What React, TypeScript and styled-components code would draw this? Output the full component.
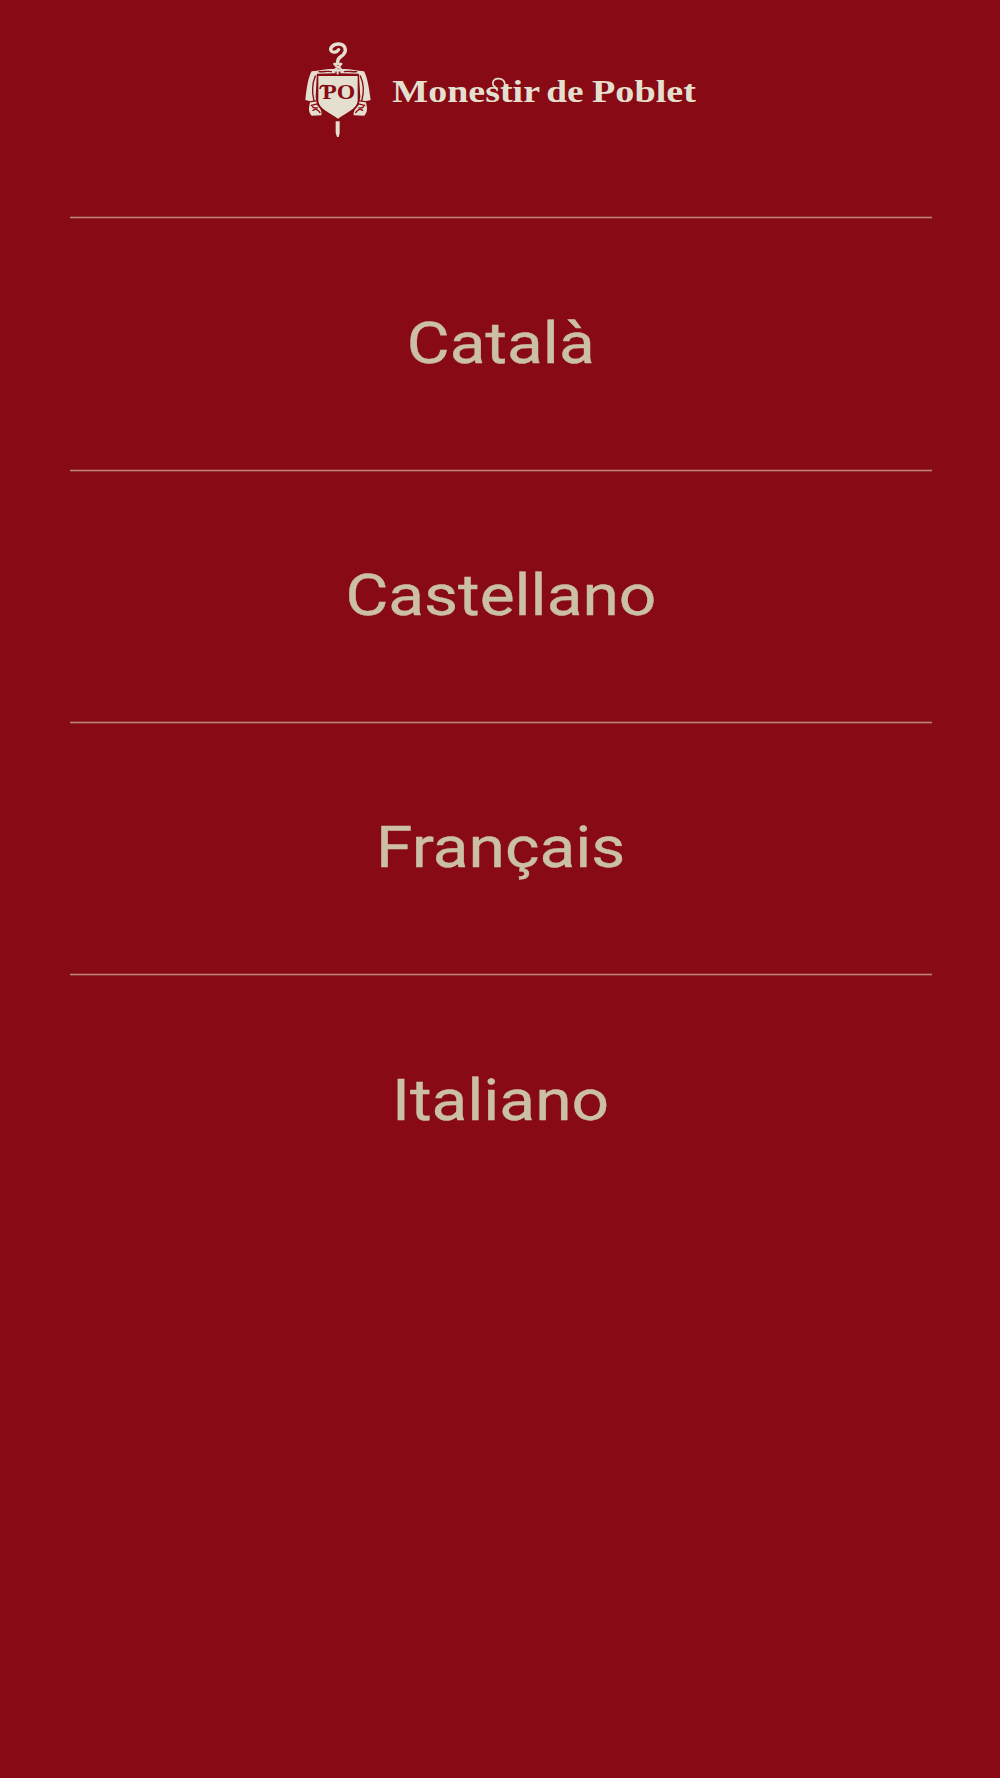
import { FC } from 'react';
import styled, { createGlobalStyle } from 'styled-components';

const languages = [
    { code: 'ca', name: 'Català' },
    { code: 'es', name: 'Castellano' },
    { code: 'fr', name: 'Français' },
    { code: 'it', name: 'Italiano' },
];

const Logo: FC = () => (
    <LogoDrawing viewBox='0 0 1230 330' role='img' aria-label='Monestir de Poblet'>
        {/* crosier */}
        <g fill='none' stroke='#e4dfcf' strokeLinecap='round'>
            <path
                d='M128 82 C127 68 136 67 144 60 C157 48 151 28 132 27 C113 26 103 41 109 48 C114 54 126 52 131 44'
                strokeWidth='10'
            />
            <path d='M118 87 H139 M116 106 H141' strokeWidth='7' />
            <path d='M121 92 L137 101 M136 92 L121 102 M128 105 V117' strokeWidth='6' />
        </g>
        <path d='M122 259 H134 V294 L131 306 H126 L122 294 Z' fill='#e4dfcf' />
        {/* mantle */}
        <g fill='#e4dfcf'>
            <path d='M121 103 C97 100 76 107 50 109 C40 126 35 158 31 195 L46 199 C42 216 38 229 50 242 L79 241 C82 231 77 221 66 210 L62 185 L66 116 L121 115 Z' />
            <path d='M136 103 C160 100 182 107 207 109 C217 126 222 158 227 195 L212 199 C216 216 220 229 208 242 L176 241 C174 231 180 221 191 210 L196 185 L191 116 L136 115 Z' />
        </g>
        <g fill='none' stroke='#870a14' strokeWidth='4' strokeLinecap='round'>
            <path d='M61 123 C51 147 51 174 57 198 M47 200 L69 197 M49 211 L70 206 M54 226 C62 221 69 223 75 233 M52 214 C57 223 61 217 67 219 M72 110 C88 111 97 107 109 110' />
            <path d='M196 123 C207 147 207 174 200 198 M211 200 L188 197 M209 211 L187 206 M203 226 C195 221 188 223 182 233 M206 214 C201 223 196 217 191 219 M185 110 C169 111 160 107 148 110' />
        </g>
        {/* shield */}
        <path
            d='M70 123 H188 V199 C186 221 154 234 129 251 C104 234 72 221 70 199 Z'
            fill='#e4dfcf'
            stroke='#870a14'
            strokeWidth='9'
            paintOrder='stroke'
        />
        <Monogram x='82' y='191' textLength='99' lengthAdjust='spacingAndGlyphs'>
            PO
        </Monogram>
        <path d='M75 162 C76 151 84 151 94 153' fill='none' stroke='#870a14' strokeWidth='5' />
        <Wordmark y='200'>
            <tspan x='292' textLength='443' lengthAdjust='spacingAndGlyphs'>
                Monestir
            </tspan>
            <tspan x='754' textLength='112' lengthAdjust='spacingAndGlyphs'>
                de
            </tspan>
            <tspan x='891' textLength='312' lengthAdjust='spacingAndGlyphs'>
                Poblet
            </tspan>
        </Wordmark>
        {/* ligature over the s and t */}
        <path
            d='M602 156 C588 150 592 132 609 131 C626 130 633 142 627 155'
            fill='none'
            stroke='#e4dfcf'
            strokeWidth='5'
        />
    </LogoDrawing>
);

const App: FC = () => (
    <Screen>
        <GlobalStyle />
        <Header>
            <Logo />
        </Header>
        <LanguageList>
            {languages.map(({ code, name }) => (
                <LanguageItem key={code}>
                    <LanguageButton lang={code}>
                        <Label>{name}</Label>
                    </LanguageButton>
                </LanguageItem>
            ))}
        </LanguageList>
    </Screen>
);

export default App;

const GlobalStyle = createGlobalStyle`
    * {
        box-sizing: border-box;
    }

    body {
        margin: 0;
        background-color: #870a14;
    }
`;

const Screen = styled.main`
    display: flex;
    flex-direction: column;
    min-height: 1778px;
    background-color: #870a14;
    font-family: Roboto, sans-serif;
`;

const Header = styled.header`
    display: flex;
    justify-content: center;
    height: 216.4px;
    padding-top: 35px;
`;

const LogoDrawing = styled.svg`
    width: 410px;
    height: 110px;
`;

const Monogram = styled.text`
    fill: #870a14;
    font-family: 'Liberation Serif', serif;
    font-size: 62px;
    font-weight: 700;
`;

const Wordmark = styled.text`
    fill: #e4dfcf;
    font-family: 'Liberation Serif', serif;
    font-size: 94px;
    font-weight: 700;
`;

const LanguageList = styled.ul`
    display: flex;
    flex-direction: column;
    margin: 0;
    padding: 0 68px 0 70px;
    list-style: none;
`;

const LanguageItem = styled.li`
    height: 252.3px;

    &::before {
        content: '';
        display: block;
        height: 3px;
        background: linear-gradient(#932f2e 1px, #bd8577 1px 2px, #932f2e 2px);
    }
`;

const LanguageButton = styled.button`
    display: flex;
    align-items: center;
    justify-content: center;
    width: 100%;
    height: 247px;
    padding: 0;
    border: none;
    background: none;
    color: #cbc0a7;
    font-family: inherit;
    font-size: 58px;
    line-height: 68px;
    cursor: pointer;
`;

const Label = styled.span`
    display: block;
    transform: scaleX(1.136);
    -webkit-text-stroke: 0.4px #cbc0a7;
`;
